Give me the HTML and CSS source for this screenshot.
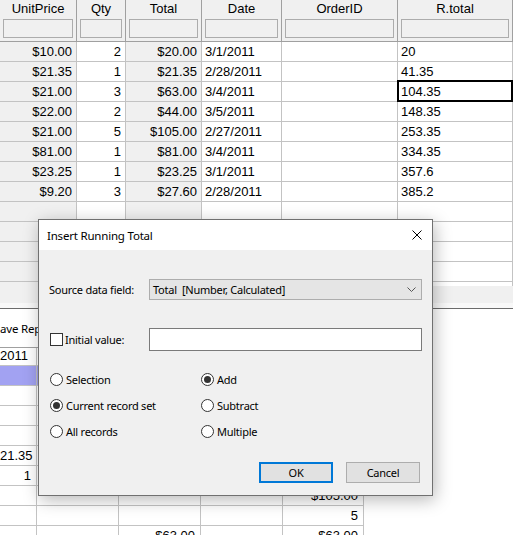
FILE: index.html
```html
<!DOCTYPE html>
<html lang="en">
<head>
    <meta charset="UTF-8">
    <title>Orders - Insert Running Total</title>
    <link rel="stylesheet" href="styles.css">
</head>
<body>
    <div class="screen">
        <!-- order lines grid -->
        <div class="grid top-grid">
            <div class="row head-row">
                <div class="cell">UnitPrice<div class="filter"></div></div>
                <div class="cell">Qty<div class="filter"></div></div>
                <div class="cell">Total<div class="filter"></div></div>
                <div class="cell">Date<div class="filter"></div></div>
                <div class="cell">OrderID<div class="filter"></div></div>
                <div class="cell">R.total<div class="filter"></div></div>
            </div>
            <div class="row">
                <div class="cell num calc">$10.00</div><div class="cell num">2</div><div class="cell num calc">$20.00</div>
                <div class="cell">3/1/2011</div><div class="cell"></div><div class="cell">20</div>
            </div>
            <div class="row">
                <div class="cell num calc">$21.35</div><div class="cell num">1</div><div class="cell num calc">$21.35</div>
                <div class="cell">2/28/2011</div><div class="cell"></div><div class="cell">41.35</div>
            </div>
            <div class="row">
                <div class="cell num calc">$21.00</div><div class="cell num">3</div><div class="cell num calc">$63.00</div>
                <div class="cell">3/4/2011</div><div class="cell"></div><div class="cell current">104.35</div>
            </div>
            <div class="row">
                <div class="cell num calc">$22.00</div><div class="cell num">2</div><div class="cell num calc">$44.00</div>
                <div class="cell">3/5/2011</div><div class="cell"></div><div class="cell">148.35</div>
            </div>
            <div class="row">
                <div class="cell num calc">$21.00</div><div class="cell num">5</div><div class="cell num calc">$105.00</div>
                <div class="cell">2/27/2011</div><div class="cell"></div><div class="cell">253.35</div>
            </div>
            <div class="row">
                <div class="cell num calc">$81.00</div><div class="cell num">1</div><div class="cell num calc">$81.00</div>
                <div class="cell">3/4/2011</div><div class="cell"></div><div class="cell">334.35</div>
            </div>
            <div class="row">
                <div class="cell num calc">$23.25</div><div class="cell num">1</div><div class="cell num calc">$23.25</div>
                <div class="cell">3/1/2011</div><div class="cell"></div><div class="cell">357.6</div>
            </div>
            <div class="row">
                <div class="cell num calc">$9.20</div><div class="cell num">3</div><div class="cell num calc">$27.60</div>
                <div class="cell">2/28/2011</div><div class="cell"></div><div class="cell">385.2</div>
            </div>
            <div class="row"><div class="cell calc"></div><div class="cell"></div><div class="cell calc"></div><div class="cell"></div><div class="cell"></div><div class="cell"></div></div>
            <div class="row"><div class="cell calc"></div><div class="cell"></div><div class="cell calc"></div><div class="cell"></div><div class="cell"></div><div class="cell"></div></div>
            <div class="row"><div class="cell calc"></div><div class="cell"></div><div class="cell calc"></div><div class="cell"></div><div class="cell"></div><div class="cell"></div></div>
            <div class="row"><div class="cell calc"></div><div class="cell"></div><div class="cell calc"></div><div class="cell"></div><div class="cell"></div><div class="cell"></div></div>
            <div class="row"><div class="cell calc"></div><div class="cell"></div><div class="cell calc"></div><div class="cell"></div><div class="cell"></div><div class="cell"></div></div>
        </div>

        <div class="splitter"></div>

        <div class="toolbar">
            <span class="tool">ave Report</span>
        </div>

        <!-- report preview grid -->
        <div class="grid bottom-grid">
            <div class="row first-row">
                <div class="cell">2011</div><div class="cell"></div><div class="cell"></div><div class="cell"></div><div class="cell"></div>
            </div>
            <div class="row selected">
                <div class="cell"></div><div class="cell"></div><div class="cell"></div><div class="cell"></div><div class="cell"></div>
            </div>
            <div class="row"><div class="cell"></div><div class="cell"></div><div class="cell"></div><div class="cell"></div><div class="cell"></div></div>
            <div class="row"><div class="cell"></div><div class="cell"></div><div class="cell"></div><div class="cell"></div><div class="cell"></div></div>
            <div class="row"><div class="cell"></div><div class="cell"></div><div class="cell"></div><div class="cell"></div><div class="cell"></div></div>
            <div class="row">
                <div class="cell num">21.35</div><div class="cell"></div><div class="cell"></div><div class="cell"></div><div class="cell"></div>
            </div>
            <div class="row">
                <div class="cell num">1</div><div class="cell"></div><div class="cell"></div><div class="cell"></div><div class="cell"></div>
            </div>
            <div class="row">
                <div class="cell"></div><div class="cell"></div><div class="cell"></div><div class="cell"></div><div class="cell num">$105.00</div>
            </div>
            <div class="row">
                <div class="cell"></div><div class="cell"></div><div class="cell"></div><div class="cell"></div><div class="cell num">5</div>
            </div>
            <div class="row">
                <div class="cell"></div><div class="cell"></div><div class="cell num">$63.00</div><div class="cell"></div><div class="cell num">$63.00</div>
            </div>
        </div>

        <!-- modal dialog -->
        <div class="dialog">
            <div class="dialog-title">
                <span>Insert Running Total</span>
                <svg class="close" width="10" height="10" viewBox="0 0 10 10">
                    <path d="M0.5 0.5 L9.5 9.5 M9.5 0.5 L0.5 9.5" stroke="#000" stroke-width="1" fill="none"/>
                </svg>
            </div>
            <div class="dialog-body">
                <div class="field-row">
                    <div class="field-label">Source data field:</div>
                    <div class="combo">
                        <span>Total&nbsp; [Number, Calculated]</span>
                        <svg width="9" height="5" viewBox="0 0 9 5">
                            <path d="M0.5 0.5 L4.5 4.5 L8.5 0.5" stroke="#555" stroke-width="1" fill="none"/>
                        </svg>
                    </div>
                </div>
                <div class="field-row">
                    <div class="field-label"><span class="check"></span>Initial value:</div>
                    <div class="text-input"></div>
                </div>
                <div class="options">
                    <div class="option"><span class="radio"></span>Selection</div>
                    <div class="option"><span class="radio on"></span>Add</div>
                    <div class="option"><span class="radio on"></span>Current record set</div>
                    <div class="option"><span class="radio"></span>Subtract</div>
                    <div class="option"><span class="radio"></span>All records</div>
                    <div class="option"><span class="radio"></span>Multiple</div>
                </div>
                <div class="buttons">
                    <div class="button default">OK</div>
                    <div class="button">Cancel</div>
                </div>
            </div>
        </div>
    </div>
</body>
</html>
```

FILE: styles.css
```css
* {
    box-sizing: border-box;
}

body {
    margin: 0;
    background: #fff;
    color: #000;
    font-family: "Liberation Sans", Arial, sans-serif;
    font-size: 13px;
    overflow: hidden;
}

.screen {
    position: relative;
    width: 513px;
    height: 535px;
    overflow: hidden;
}

/* grids */
.row {
    display: grid;
    height: 20px;
}

.top-grid {
    height: 286px;
    overflow: hidden;
}

.top-grid .row {
    grid-template-columns: 77px 49px 76px 80px 116px 115px;
}

.bottom-grid {
    width: 364px;
    border-top: 1px solid #a0a0a0;
}

.bottom-grid .row {
    grid-template-columns: 37px 82px 82px 82px 81px;
}

.bottom-grid .first-row {
    height: 18px;
}

.cell {
    border-right: 1px solid #c3c3c3;
    border-bottom: 1px solid #c3c3c3;
    padding: 0 3px;
    line-height: 19px;
    white-space: nowrap;
    overflow: hidden;
}

.cell.num {
    text-align: right;
    padding-right: 4px;
}

.bottom-grid .cell {
    padding-left: 0;
}

.bottom-grid .cell.num {
    padding-right: 5px;
}

.cell.calc {
    background: #f0f0f0;
}

.first-row .cell {
    line-height: 16px;
}

.row.selected .cell {
    background: #a2a2f2;
}

.cell.current {
    position: relative;
    overflow: visible;
}

.cell.current::after {
    content: "";
    position: absolute;
    top: -2px;
    left: -1px;
    right: -1px;
    bottom: -1px;
    border: 2px solid #000;
}

.head-row {
    height: 42px;
    background: #f0f0f0;
}

.head-row .cell {
    border-color: #a0a0a0;
    text-align: center;
    line-height: 16px;
    padding: 1px 3px 0;
}

.filter {
    height: 19px;
    margin-top: 2px;
    border: 1px solid #acacac;
    background: #f0f0f0;
}

/* divider and toolbar between the two grids */
.splitter {
    height: 23px;
    background: linear-gradient(#f0f0f0 0, #f0f0f0 17px, #f8f8f8 17px);
    border-bottom: 1px solid #6b6b6b;
}

.toolbar {
    height: 38px;
    display: flex;
    align-items: center;
    font-family: "Noto Sans", sans-serif;
    font-size: 11.5px;
    letter-spacing: -0.2px;
}

/* dialog */
.dialog {
    position: absolute;
    left: 38px;
    top: 219px;
    width: 395px;
    height: 277px;
    border: 1px solid #707070;
    background: #f0f0f0;
    box-shadow: 2px 4px 16px rgba(0, 0, 0, 0.28);
    font-family: "Noto Sans", sans-serif;
    font-size: 11px;
    letter-spacing: -0.25px;
}

.dialog-title {
    height: 30px;
    background: #fff;
    display: flex;
    align-items: center;
    justify-content: space-between;
    padding: 0 10px 0 8px;
    font-size: 11.5px;
    letter-spacing: -0.2px;
}

.dialog-body {
    padding: 29px 10px 0 10px;
}

.field-row {
    display: flex;
    align-items: center;
}

.field-row + .field-row {
    margin-top: 28px;
}

.field-label {
    width: 100px;
    display: flex;
    align-items: center;
}

.combo {
    width: 273px;
    height: 21px;
    border: 1px solid #adadad;
    background: #e5e5e5;
    display: flex;
    align-items: center;
    justify-content: space-between;
    padding: 0 5px 0 3px;
}

.text-input {
    width: 273px;
    height: 23px;
    border: 1px solid #7a7a7a;
    background: #fff;
}

.check {
    width: 13px;
    height: 13px;
    border: 1px solid #333;
    background: #fff;
    margin: 0 2px 0 1px;
}

.options {
    margin-top: 22px;
    padding-left: 1px;
    display: grid;
    grid-template-columns: 151px 151px;
    row-gap: 13px;
}

.option {
    height: 13px;
    display: flex;
    align-items: center;
}

.radio {
    width: 13px;
    height: 13px;
    border: 1px solid #333;
    border-radius: 50%;
    background: #fff;
    margin-right: 3px;
    display: flex;
    align-items: center;
    justify-content: center;
}

.radio.on::after {
    content: "";
    width: 7px;
    height: 7px;
    border-radius: 50%;
    background: #333;
}

.buttons {
    margin-top: 24px;
    padding-right: 2px;
    display: flex;
    justify-content: flex-end;
    gap: 13px;
}

.button {
    width: 74px;
    height: 21px;
    border: 1px solid #adadad;
    background: #e1e1e1;
    display: flex;
    align-items: center;
    justify-content: center;
}

.button.default {
    border: 2px solid #0078d7;
}
```
